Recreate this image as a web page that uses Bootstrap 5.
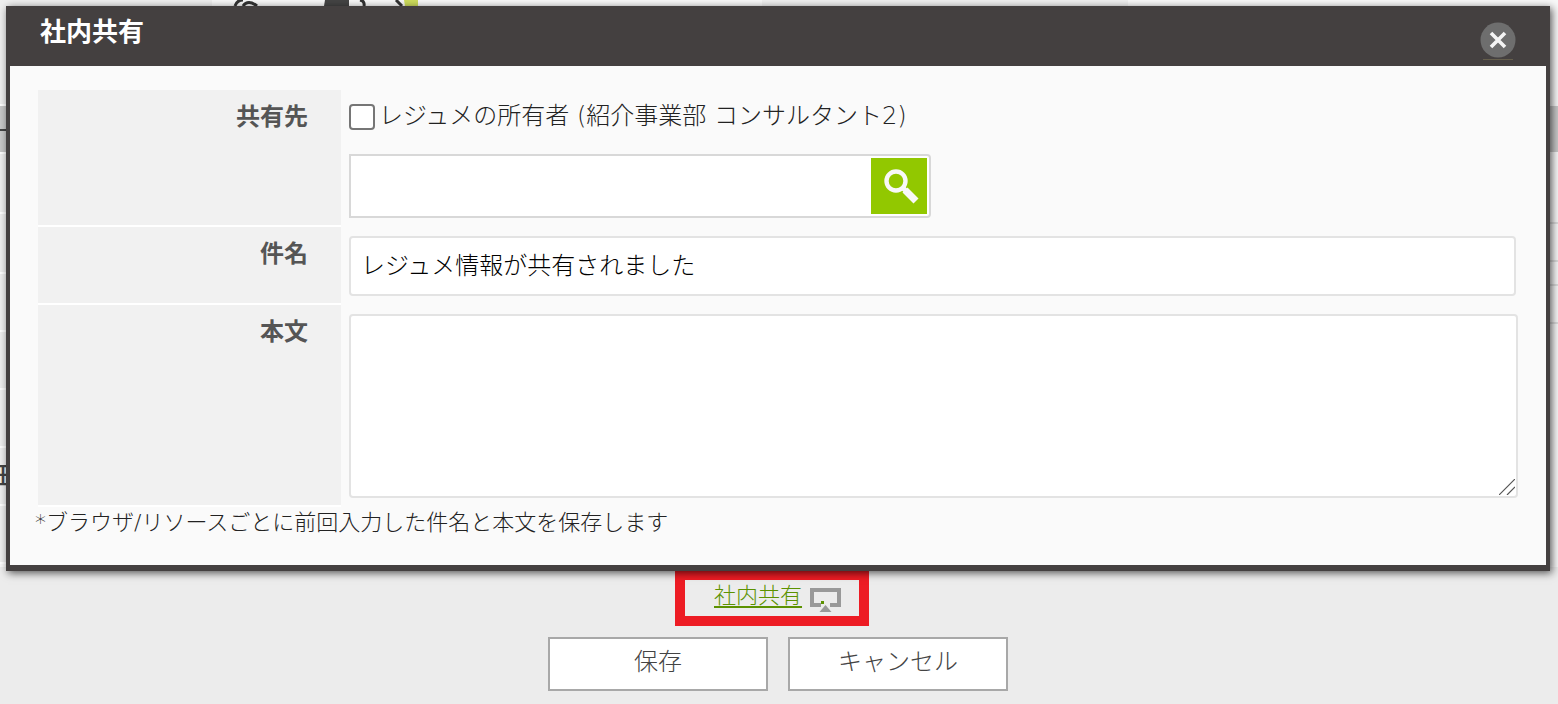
<!DOCTYPE html>
<html lang="ja">
<head>
<meta charset="utf-8">
<meta name="viewport" content="width=device-width, initial-scale=1">
<title>社内共有</title>
<link href="https://cdn.jsdelivr.net/npm/bootstrap@5.3.0/dist/css/bootstrap.min.css" rel="stylesheet">
<style>
body { background: #ececec; color: #222; font-family: "DejaVu Sans", "Noto Sans CJK JP", sans-serif; font-size: 24px; line-height: 32px; font-weight: 300; }
.jp { font-family: "Noto Sans CJK JP", sans-serif; }
.stage { padding: 6px 8px 0 6px; }
.under { inset: 0 0 4px 0; background: #f8f8f8; z-index: 0; }
.under-top { height: 6px; background: #f8f8f8; }
.under-top .blank-a { flex: 0 0 212px; background: #efefef; }
.under-top .art { flex: 0 0 206px; }
.under-top .blank-b { flex: 0 0 344px; }
.under-top .blank-c { flex: 0 0 366px; background: #efefef; }
.under-left { width: 40px; background: #efefef; overflow: hidden; }
.under-left div { border-bottom: 2px solid #fff; height: 58px; }
.under-left .lead-row, .under-right .lead-row { height: 100px; }
.under-left .head-row { height: 48px; background: linear-gradient(#c8c8c8 23px, #444 23px, #444 25px, #c8c8c8 25px); }
.under-left .first-row { height: 60px; }
.under-left .text-row { color: #444; font-weight: 500; line-height: 52px; text-indent: -9px; }
.under-right { width: 40px; }
.under-right div { border-bottom: 2px solid #ddd; height: 38px; }
.under-right .lead-row { border: 0; }
.under-right .head-row { height: 46px; background: #c8c8c8; border: 0; }
.under-right .tall-row { height: 72px; }
.under-right .short-row { height: 24px; }
.share-dialog { z-index: 1; background: #fafafa; border: 4px solid #444040; border-top: 0; border-bottom-width: 6px; box-shadow: 2px 2px 8px rgba(0,0,0,.65); }
.share-head { background: #444040; color: #fff; height: 60px; padding: 8px 30px 0 30px; }
.share-head h1 { font-size: 26px; line-height: 32px; font-weight: 700; }
.close-btn { width: 36px; height: 46px; margin-top: 5px; border: 0; background: none; padding: 0; }
.close-btn svg { display: block; }
.share-body { padding: 24px 28px 26px 28px; }
.form-grid { width: 100%; }
.form-grid th { font-family: "Noto Sans CJK JP", sans-serif; width: 303px; background: #f1f1f1; border-bottom: 2px solid #fff; color: #555; font-weight: 700; text-align: right; vertical-align: top; padding: 9px 33px 0 0; }
.form-grid td { vertical-align: top; padding: 10px 0 8px 8px; }
.form-grid tr:last-child td { padding: 10px 0 8px 8px; }
.owner-row { height: 32px; margin-bottom: 22px; }
.owner-check { appearance: none; width: 26px; height: 26px; border: 2px solid #767676; border-radius: 4px; background: #fff; margin: 2px 4px 0 0; }
.owner-check:checked { background: #92c800; }
.picker { width: 582px; height: 64px; border: 2px solid #d8d8d8; border-radius: 0 4px 4px 0; background: #fff; padding: 2px; }
.picker input { border: 0; background: none; min-width: 0; outline: 0; }
.picker button { width: 56px; height: 56px; border: 0; background: #92c800; padding: 0; }
.field { display: block; border: 2px solid #e3e3e3; border-radius: 4px; background: #fff; color: #000; padding: 4px 10px 10px; font-weight: 300; }
.subject { width: calc(100% - 2px); height: 60px; }
.message { width: 100%; height: 184px; resize: vertical; }
.message::-webkit-resizer { background: transparent; }
.grip { right: 3px; bottom: 3px; pointer-events: none; }
.note { font-size: 22px; line-height: 32px; margin: 0 0 0 -3px; }
.callout-box { border: 10px solid #ed1c24; border-top-width: 9px; width: 194px; height: 55px; padding-left: 29px; gap: 8px; margin-right: 14px; }
.callout-box a { font-size: 22px; line-height: 26px; color: #5c9200; text-decoration-thickness: 2px; text-underline-offset: 3px; }
.buttons { gap: 20px; padding: 11px 2px 12px 0; }
.act { width: 220px; height: 54px; background: #fff; border: 2px solid #a8a8a8; color: #444; padding: 0 0 8px; font-weight: 300; }
</style>
</head>
<body>
<div class="stage position-relative">
  <div class="under position-absolute" aria-hidden="true">
    <div class="under-top d-flex">
      <div class="blank-a"></div>
      <svg class="art" width="206" height="6" viewBox="0 0 206 6"><g fill="none" stroke="#333" stroke-width="3"><path d="M23 6q2-6 8-6M31 6q5-7 14 0M148 0q5 1 4 6M184 0l6 6"/></g><path d="M113 0h24v6h-25z" fill="#444"/><path d="M192 0h14v6h-13z" fill="#cddc5c"/></svg>
      <div class="blank-b"></div>
      <div class="blank-c"></div>
    </div>
    <div class="d-flex justify-content-between">
      <div class="under-left">
        <div class="lead-row"></div><div class="head-row"></div><div class="first-row"></div><div class="first-row"></div><div></div><div></div><div></div><div class="text-row jp">王</div><div></div>
      </div>
      <div class="under-right">
        <div class="lead-row"></div><div class="head-row"></div><div class="tall-row"></div><div></div><div class="short-row"></div><div></div>
      </div>
    </div>
  </div>

  <div class="share-dialog position-relative" role="dialog" aria-labelledby="share-title">
    <div class="share-head d-flex justify-content-between">
      <h1 id="share-title" class="jp m-0">社内共有</h1>
      <button class="close-btn" type="button" aria-label="閉じる">
        <svg width="36" height="42" viewBox="0 0 36 42"><circle cx="18" cy="19" r="17.500" fill="#6e6e6e"/><path d="M11 12l14 14M25 12L11 26" stroke="#f4f4f4" stroke-width="3.600"/><path d="M3 38.500h30" stroke="#665f4c"/></svg>
      </button>
    </div>
    <form class="share-body">
      <table class="form-grid">
        <tr>
          <th scope="row"><label for="target">共有先</label></th>
          <td>
            <div class="owner-row d-flex align-items-center"><input class="owner-check" type="checkbox" id="owner"><label for="owner">レジュメの所有者 (紹介事業部 コンサルタント2)</label></div>
            <div class="picker d-flex">
              <input class="flex-grow-1" type="text" id="target">
              <button type="button" aria-label="検索"><svg class="d-block" width="56" height="56" viewBox="0 0 56 56"><circle cx="25" cy="23" r="9.500" fill="none" stroke="#f8f8f8" stroke-width="4.400"/><path d="M32 30l3 3" stroke="#f8f8f8" stroke-width="5"/><path d="M34 32l11 11" stroke="#f8f8f8" stroke-width="7"/></svg></button>
            </div>
          </td>
        </tr>
        <tr>
          <th scope="row"><label for="subject">件名</label></th>
          <td><input class="field subject jp" type="text" id="subject" value="レジュメ情報が共有されました"></td>
        </tr>
        <tr>
          <th scope="row"><label for="message">本文</label></th>
          <td>
            <div class="position-relative">
              <textarea class="field message" id="message"></textarea>
              <svg class="grip position-absolute" width="16" height="16" viewBox="0 0 16 16" stroke="#555" stroke-width="1.200"><path d="M0 16L16 0M8 16l8-8"/></svg>
            </div>
          </td>
        </tr>
      </table>
      <p class="note">*ブラウザ/リソースごとに前回入力した件名と本文を保存します</p>
    </form>
  </div>
</div>

<div class="d-flex flex-column align-items-center">
  <div class="callout-box d-flex">
    <a class="jp" href="#">社内共有</a>
    <svg class="mt-2" width="31" height="24" viewBox="0 0 31 24"><path d="M11 17H2V2h27v15h-9" fill="none" stroke="#999" stroke-width="4"/><path d="M15.500 17l6 7h-12z" fill="#999"/><path d="M11 13h3v3h-3z" fill="#5c9200"/></svg>
  </div>
  <div class="buttons d-flex">
    <button class="act jp" type="button">保存</button>
    <button class="act jp" type="button">キャンセル</button>
  </div>
</div>
<script src="https://cdn.jsdelivr.net/npm/bootstrap@5.3.0/dist/js/bootstrap.bundle.min.js"></script>
</body>
</html>
